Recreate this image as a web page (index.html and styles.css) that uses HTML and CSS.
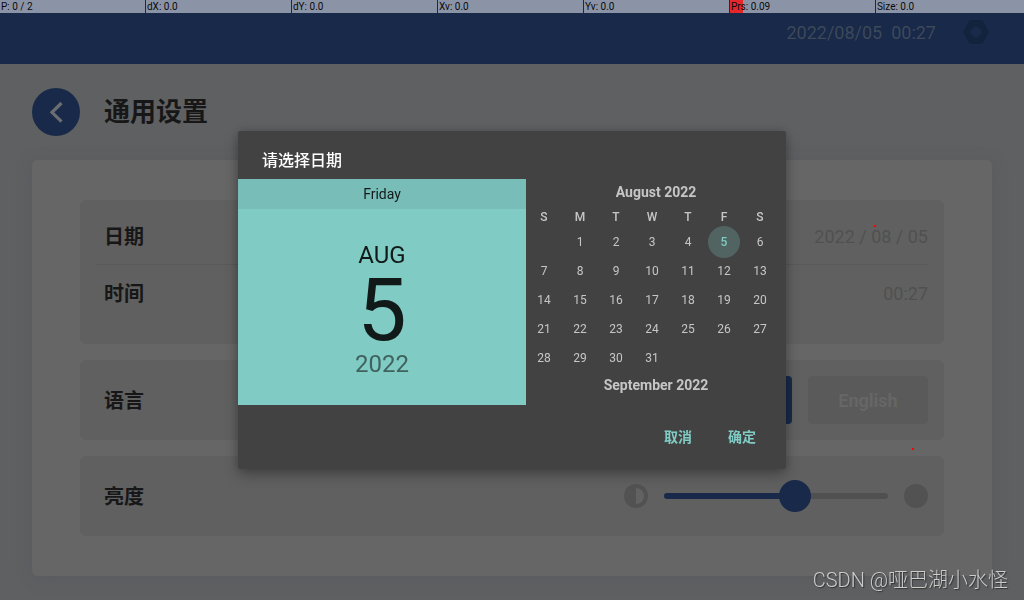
FILE: index.html
```html
<!DOCTYPE html>
<html lang="zh-CN">
<head>
<meta charset="utf-8">
<meta name="viewport" content="width=device-width, initial-scale=1">
<title>通用设置</title>
<link rel="stylesheet" href="styles.css">
</head>
<body>
<header class="topbar">
  <time class="topbar-clock">2022/08/05&nbsp; 00:27</time>
  <button class="icon-button" type="button" aria-label="设置">
    <svg width="26" height="24" viewBox="0 0 26 24"><path fill="#12243d" fill-rule="evenodd" d="M7.8 0h10.4q1 0 1.6.9l5.7 9.9q.7 1.2 0 2.4l-5.7 9.9q-.6.9-1.6.9H7.8q-1 0-1.6-.9L.5 13.2q-.7-1.2 0-2.4L6.2.9Q6.8 0 7.8 0zM13 6.700a5.300 5.300 0 1 0 0 10.600a5.300 5.300 0 1 0 0-10.600z"/></svg>
  </button>
</header>

<main class="page">
  <div class="page-head">
    <button class="back" type="button" aria-label="返回">
      <svg width="48" height="48" viewBox="0 0 48 48"><path d="M29.500 15 20 24.300l9.500 9.300" fill="none" stroke="#6b6d70" stroke-width="3.200"/></svg>
    </button>
    <h1 class="page-title">通用设置</h1>
  </div>

  <div class="card">
    <section class="panel panel-datetime">
      <div class="row row-divided"><span class="label">日期</span><span class="value">2022 / 08 / 05</span></div>
      <div class="row"><span class="label">时间</span><span class="value">00:27</span></div>
    </section>
    <section class="panel">
      <div class="row row-tall">
        <span class="label">语言</span>
        <div class="languages">
          <button class="language language-on" type="button">中文</button>
          <button class="language" type="button">English</button>
        </div>
      </div>
    </section>
    <section class="panel">
      <div class="row row-tall">
        <label class="label" for="brightness">亮度</label>
        <div class="brightness">
          <svg width="24" height="24" viewBox="0 0 24 24"><circle cx="12" cy="12" r="12" fill="#525252"/><path d="M12 4a8 8 0 0 1 0 16z" fill="#626262"/></svg>
          <input class="slider" id="brightness" type="range" min="0" max="100" value="60">
          <svg width="24" height="24" viewBox="0 0 24 24"><circle cx="12" cy="12" r="12" fill="#525252"/></svg>
        </div>
      </div>
    </section>
  </div>
</main>

<div class="overlay">
  <section class="dialog" role="dialog" aria-labelledby="dialog-title">
    <h2 class="dialog-title" id="dialog-title">请选择日期</h2>
    <div class="picker">
      <div class="summary">
        <div class="summary-weekday">Friday</div>
        <div class="summary-date">
          <span class="summary-month">AUG</span>
          <span class="summary-day">5</span>
          <span class="summary-year">2022</span>
        </div>
      </div>
      <div class="calendar">
        <h3 class="month">August 2022</h3>
        <table class="days">
          <thead><tr><th>S</th><th>M</th><th>T</th><th>W</th><th>T</th><th>F</th><th>S</th></tr></thead>
          <tbody>
            <tr><td></td><td><button type="button" class="day">1</button></td><td><button type="button" class="day">2</button></td><td><button type="button" class="day">3</button></td><td><button type="button" class="day">4</button></td><td><button type="button" class="day day-on">5</button></td><td><button type="button" class="day">6</button></td></tr>
            <tr><td><button type="button" class="day">7</button></td><td><button type="button" class="day">8</button></td><td><button type="button" class="day">9</button></td><td><button type="button" class="day">10</button></td><td><button type="button" class="day">11</button></td><td><button type="button" class="day">12</button></td><td><button type="button" class="day">13</button></td></tr>
            <tr><td><button type="button" class="day">14</button></td><td><button type="button" class="day">15</button></td><td><button type="button" class="day">16</button></td><td><button type="button" class="day">17</button></td><td><button type="button" class="day">18</button></td><td><button type="button" class="day">19</button></td><td><button type="button" class="day">20</button></td></tr>
            <tr><td><button type="button" class="day">21</button></td><td><button type="button" class="day">22</button></td><td><button type="button" class="day">23</button></td><td><button type="button" class="day">24</button></td><td><button type="button" class="day">25</button></td><td><button type="button" class="day">26</button></td><td><button type="button" class="day">27</button></td></tr>
            <tr><td><button type="button" class="day">28</button></td><td><button type="button" class="day">29</button></td><td><button type="button" class="day">30</button></td><td><button type="button" class="day">31</button></td><td></td><td></td><td></td></tr>
          </tbody>
        </table>
        <h3 class="month">September 2022</h3>
      </div>
    </div>
    <div class="actions">
      <button class="action" type="button">取消</button>
      <button class="action" type="button">确定</button>
    </div>
  </section>
</div>

<div class="pointer-bar">
  <span>P: 0 / 2</span><span>dX: 0.0</span><span>dY: 0.0</span><span>Xv: 0.0</span><span>Yv: 0.0</span><span class="pressure">Prs: 0.09</span><span>Size: 0.0</span>
</div>
<i class="touch touch-a"></i>
<i class="touch touch-b"></i>
<div class="watermark">CSDN @哑巴湖小水怪</div>
</body>
</html>
```

FILE: styles.css
```css
* { box-sizing: border-box; }

body {
  margin: 0;
  min-height: 100vh;
  background: #5f6062;
  color: #171717;
  font-family: Roboto, "Noto Sans CJK SC", sans-serif;
}

button {
  margin: 0;
  padding: 0;
  border: 0;
  background: none;
  color: inherit;
  font: inherit;
}

svg { display: block; }
h1, h2, h3 { margin: 0; }

.topbar {
  display: flex;
  align-items: center;
  justify-content: flex-end;
  gap: 27px;
  height: 64px;
  padding: 0 35px;
  background: #182949;
}
.topbar-clock { color: #3d4859; font-size: 18px; }

.page { padding: 24px 32px; }
.page-head {
  display: flex;
  align-items: center;
  gap: 24px;
  margin-bottom: 24px;
}
.back { border-radius: 50%; background: #182949; }
.page-title { font-size: 26px; line-height: 48px; font-weight: 700; }

.card {
  display: grid;
  gap: 16px;
  padding: 40px 48px;
  border-radius: 6px;
  background: #666;
  box-shadow: 0 2px 16px rgba(70, 76, 88, .25);
}
.panel { padding: 8px 16px; border-radius: 6px; background: #606060; }
.panel-datetime { min-height: 144px; }
.row {
  display: flex;
  align-items: center;
  justify-content: space-between;
  min-height: 56px;
  padding-left: 8px;
}
.row-divided { min-height: 57px; border-bottom: 1px solid #595959; }
.row-tall { min-height: 64px; }
.label { padding-bottom: 2px; font-size: 20px; font-weight: 700; }
.value { color: #505050; font-size: 18px; }

.languages { display: flex; gap: 16px; }
.language {
  width: 120px;
  height: 48px;
  border-radius: 4px;
  background: #5a5a5a;
  color: #666;
  font-size: 18px;
  font-weight: 700;
}
.language-on { background: #182949; }

.brightness { display: flex; align-items: center; gap: 16px; }
.slider {
  appearance: none;
  width: 224px;
  height: 32px;
  margin: 0;
  background: none;
}
.slider::-webkit-slider-runnable-track {
  height: 6px;
  border-radius: 3px;
  background: linear-gradient(to right, #182949 60%, #505050 60%);
}
.slider::-webkit-slider-thumb {
  appearance: none;
  width: 32px;
  height: 32px;
  margin-top: -13px;
  border-radius: 50%;
  background: #182949;
}

.overlay {
  position: fixed;
  inset: 0;
  display: grid;
  place-items: center;
}
.dialog {
  width: 548px;
  max-width: 100%;
  border-radius: 2px;
  background: #424242;
  box-shadow: 0 6px 14px rgba(0, 0, 0, .28), 0 0 10px rgba(0, 0, 0, .16);
}
.dialog-title {
  padding: 18px 24px 6px;
  color: #fff;
  font-size: 16px;
  line-height: 24px;
  font-weight: 500;
}
.picker { display: grid; grid-template-columns: 288px 1fr; }

.summary {
  display: flex;
  flex-direction: column;
  background: #80cbc4;
  color: #111a19;
  text-align: center;
}
.summary-weekday {
  background: #78bdb7;
  font-size: 14px;
  line-height: 30px;
}
.summary-date {
  display: flex;
  flex: 1;
  flex-direction: column;
  justify-content: center;
  padding-top: 4px;
}
.summary-month { font-size: 24px; line-height: 28px; }
.summary-day { font-size: 88px; line-height: 82px; }
.summary-year { color: #40625f; font-size: 24px; line-height: 26px; }

.calendar { height: 226px; color: #c6c6c6; }
.month {
  font-size: 14px;
  line-height: 26px;
  font-weight: 700;
  text-align: center;
}
.days {
  width: 252px;
  border-collapse: collapse;
  table-layout: fixed;
  font-size: 12px;
  text-align: center;
}
.days th { height: 22px; padding: 2px 0 0; font-weight: 500; }
.days td { height: 29px; padding: 0; }
.day { position: relative; width: 100%; height: 29px; display: block; }
.day-on { color: #80cbc4; font-weight: 500; isolation: isolate; }
.day-on::before {
  content: "";
  position: absolute;
  z-index: -1;
  inset: -1px 2px -2px;
  border-radius: 50%;
  background: #526462;
}

.actions {
  display: flex;
  justify-content: flex-end;
  padding: 13px 12px 15px;
}
.action {
  width: 64px;
  height: 36px;
  color: #80cbc4;
  font-size: 14px;
  font-weight: 700;
}

.pointer-bar {
  position: absolute;
  top: 0;
  left: 0;
  right: 0;
  display: grid;
  grid-template-columns: repeat(6, calc((100% - 9px) / 7)) 1fr;
  gap: 1px;
  background: #182949;
  color: #0a0a0a;
  font-size: 10px;
  line-height: 13px;
}
.pointer-bar span { padding-left: 1px; background: #8b94a7; }
.pointer-bar .pressure { background: linear-gradient(to right, #e7262b 9%, #8b94a7 9%); }

.touch { position: absolute; width: 2px; height: 2px; background: #f00; }
.touch-a { left: 874px; top: 225px; }
.touch-b { left: 912px; top: 448px; }

.watermark {
  position: absolute;
  right: 16px;
  bottom: 6px;
  color: #ccc;
  font-size: 20px;
  line-height: 28px;
  font-weight: 300;
  text-shadow: 1px 1px 1px #333;
}
```
